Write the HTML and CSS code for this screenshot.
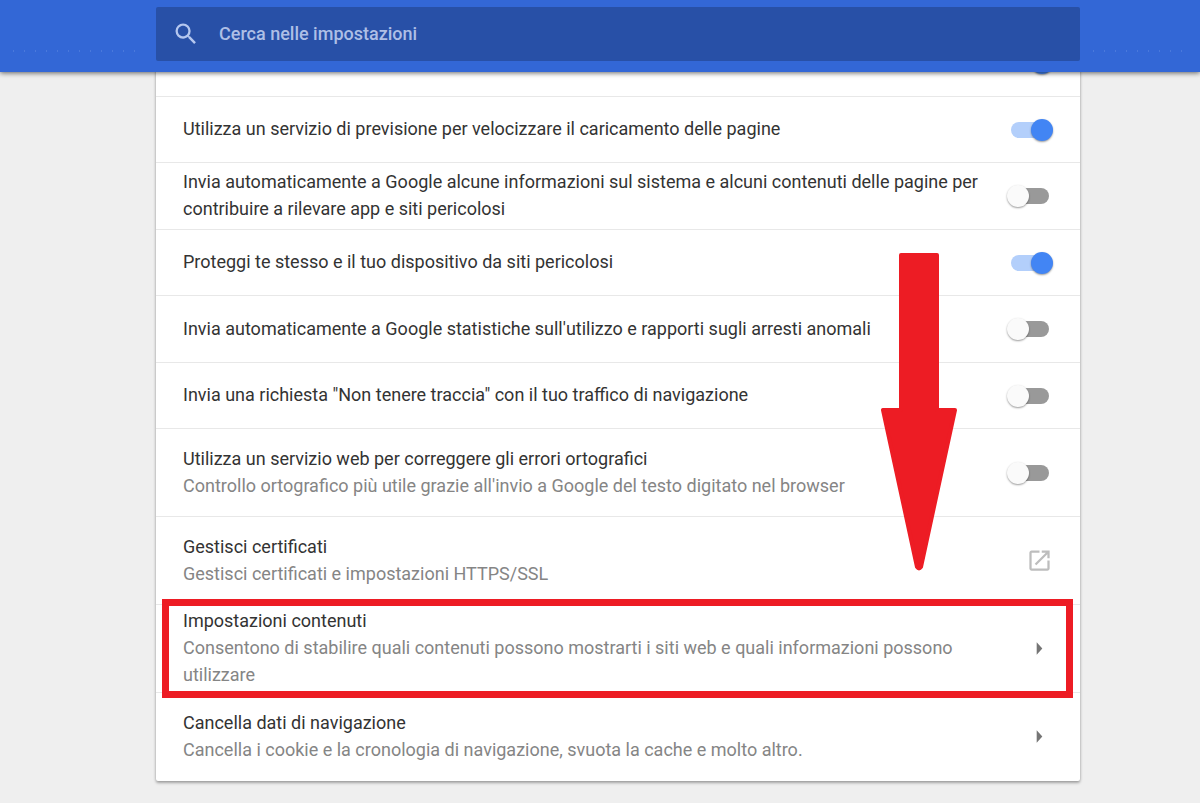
FILE: index.html
```
<!DOCTYPE html>
<html lang="it">
<head>
<meta charset="utf-8">
<meta name="viewport" content="width=device-width, initial-scale=1">
<title>Impostazioni</title>
<link rel="stylesheet" href="styles.css">
</head>
<body>
<header class="toolbar">
  <span class="dots" aria-hidden="true"></span>
  <label class="search">
    <svg class="search-icon" viewBox="0 0 24 24" aria-hidden="true"><path d="M15.5 14h-.79l-.28-.27A6.471 6.471 0 0 0 16 9.5 6.5 6.5 0 1 0 9.5 16c1.61 0 3.09-.59 4.23-1.57l.27.28v.79l5 4.99L20.49 19l-4.99-5zm-6 0C7.01 14 5 11.99 5 9.5S7.01 5 9.5 5 14 7.01 14 9.5 11.99 14 9.5 14z"/></svg>
    <input class="search-input" type="search" placeholder="Cerca nelle impostazioni" aria-label="Cerca nelle impostazioni">
  </label>
  <span class="dots dots-right" aria-hidden="true"></span>
</header>
<main class="content">
  <section class="card">
    <div class="row"><span class="text"></span><input class="toggle" type="checkbox" aria-label="Suggerimenti" checked></div>
    <label class="row"><span class="text">Utilizza un servizio di previsione per velocizzare il caricamento delle pagine</span><input class="toggle" type="checkbox" checked></label>
    <label class="row"><span class="text">Invia automaticamente a Google alcune informazioni sul sistema e alcuni contenuti delle pagine per contribuire a rilevare app e siti pericolosi</span><input class="toggle" type="checkbox"></label>
    <label class="row"><span class="text">Proteggi te stesso e il tuo dispositivo da siti pericolosi</span><input class="toggle" type="checkbox" checked></label>
    <label class="row"><span class="text">Invia automaticamente a Google statistiche sull'utilizzo e rapporti sugli arresti anomali</span><input class="toggle" type="checkbox"></label>
    <label class="row"><span class="text">Invia una richiesta "Non tenere traccia" con il tuo traffico di navigazione</span><input class="toggle" type="checkbox"></label>
    <label class="row tall"><span class="text">Utilizza un servizio web per correggere gli errori ortografici<span class="note">Controllo ortografico più utile grazie all'invio a Google del testo digitato nel browser</span></span><input class="toggle" type="checkbox"></label>
    <button class="row tall" type="button"><span class="text">Gestisci certificati<span class="note">Gestisci certificati e impostazioni HTTPS/SSL</span></span><svg class="icon external" viewBox="0 0 24 24" aria-hidden="true"><path d="M19 19H5V5h7V3H5c-1.11 0-2 .9-2 2v14c0 1.1.89 2 2 2h14c1.1 0 2-.9 2-2v-7h-2v7zM14 3v2h3.59l-9.83 9.83 1.41 1.41L19 6.41V10h2V3h-7z"/></svg></button>
    <button class="row tall marked" type="button"><span class="text">Impostazioni contenuti<span class="note">Consentono di stabilire quali contenuti possono mostrarti i siti web e quali informazioni possono utilizzare</span></span><svg class="icon" viewBox="0 0 24 24" aria-hidden="true"><path d="M9.500 6.500l5 5.500-5 5.500z"/></svg></button>
    <button class="row tall" type="button"><span class="text">Cancella dati di navigazione<span class="note">Cancella i cookie e la cronologia di navigazione, svuota la cache e molto altro.</span></span><svg class="icon" viewBox="0 0 24 24" aria-hidden="true"><path d="M9.500 6.500l5 5.500-5 5.500z"/></svg></button>
    <svg class="arrow" viewBox="0 0 76 318" aria-hidden="true"><path d="M20 2H56V157H74L40 314Q38 317 36 314L2 157H20Z"/></svg>
  </section>
</main>
</body>
</html>
```
FILE: styles.css
```
* {
  box-sizing: border-box;
}

body {
  margin: 0;
  background: #efefef;
  color: #333;
  font: 18px/27px Roboto, sans-serif;
}

.toolbar {
  position: relative;
  z-index: 3;
  display: grid;
  grid-template-columns: 13% 1fr 10%;
  padding: 7px 0 11px;
  background: #3367d6;
  box-shadow: 0 1px 5px rgba(0, 0, 0, 0.6);
}

.dots {
  height: 2px;
  margin: 43px 12px 0 8px;
  background: radial-gradient(circle, #4a79dc 1px, transparent 1px) 0 0 / 11px 2px;
}

.dots-right {
  margin-right: 16px;
}

.search {
  display: flex;
  align-items: center;
  gap: 19px;
  height: 54px;
  padding: 0 16px;
  border-radius: 2px;
  background: #2850a7;
}

.search-icon {
  flex: none;
  width: 28px;
  height: 28px;
  fill: #b5c7ef;
}

.search-input {
  flex: 1;
  min-width: 0;
  padding: 0 0 2px;
  border: 0;
  outline: 0;
  background: none;
  color: #fff;
  font: 500 18px/27px Roboto, sans-serif;
}

.search-input::placeholder {
  color: #aebfe6;
  opacity: 1;
}

.content {
  margin: -43px 10% 21px 13%;
}

.card {
  position: relative;
  padding-bottom: 1px;
  border-radius: 2px;
  background: #fff;
  box-shadow: 0 2px 3px rgba(0, 0, 0, 0.3), 0 0 3px rgba(0, 0, 0, 0.15);
}

.row {
  position: relative;
  display: flex;
  align-items: center;
  gap: 20px;
  width: 100%;
  min-height: 67px;
  padding: 0 27px;
  border: 0;
  border-top: 1px solid #e8e8e8;
  background: none;
  color: inherit;
  font: inherit;
  text-align: left;
}

.row:nth-child(even) {
  min-height: 66px;
}

.row.tall {
  min-height: 88px;
}

.text {
  flex: 1;
  padding-bottom: 2px;
}

.note {
  display: block;
  color: #858585;
}

.toggle {
  appearance: none;
  position: relative;
  flex: none;
  width: 38px;
  height: 16px;
  margin: 0 4px;
  border-radius: 8px;
  background: #999;
}

.toggle::before {
  content: "";
  position: absolute;
  top: -3px;
  left: -4px;
  width: 22px;
  height: 22px;
  border-radius: 50%;
  background: #fafafa;
  box-shadow: 0 1px 2px rgba(0, 0, 0, 0.4);
}

.toggle:checked {
  background: #b3cffb;
}

.toggle:checked::before {
  left: 20px;
  background: #4285f4;
}

.icon {
  flex: none;
  width: 27px;
  height: 27px;
  fill: #757575;
}

.external {
  fill: #bdbdbd;
}

.marked {
  z-index: 1;
}

.marked::after {
  content: "";
  position: absolute;
  inset: -6px 7px -6px 6px;
  border: 7px solid #ed1c24;
}

.arrow {
  position: absolute;
  z-index: 2;
  right: 123px;
  bottom: 210px;
  width: 76px;
  height: 318px;
  fill: #ed1c24;
  stroke: #ed1c24;
  stroke-width: 4px;
  stroke-linejoin: round;
}
```
